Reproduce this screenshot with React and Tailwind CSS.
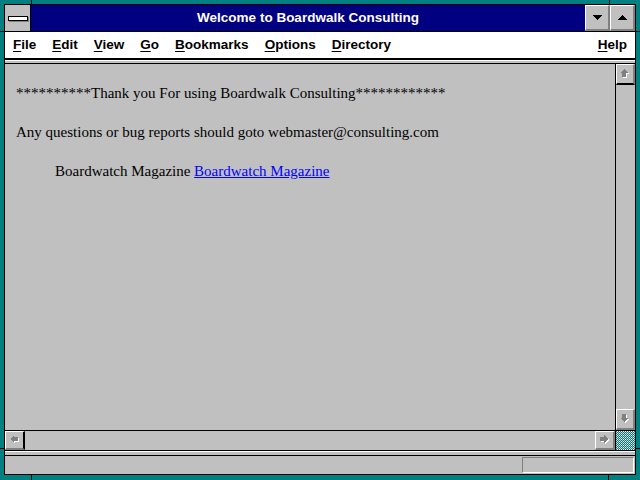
import { useState } from "react";

const sans = { fontFamily: '"Liberation Sans", Arial, sans-serif' };
const serif = { fontFamily: '"Liberation Serif", "Times New Roman", serif' };

const bevel =
  "bg-[#c0c0c0] border-t border-l border-r-2 border-b-2 border-t-white border-l-white border-r-[#808080] border-b-[#808080]";

function ScrollArrow({ dir }) {
  // grey arrow with a white drop shadow, like a disabled win 3.1 scroll arrow
  const shapes = {
    up: "4,0 8,4 6,4 6,8 2,8 2,4 0,4",
    down: "2,0 6,0 6,4 8,4 4,8 0,4 2,4",
    left: "0,4 4,0 4,2 8,2 8,6 4,6 4,8",
    right: "0,2 4,2 4,0 8,4 4,8 4,6 0,6",
  };
  return (
    <svg width="10" height="10" viewBox="0 0 10 10" shapeRendering="crispEdges">
      <polygon points={shapes[dir]} fill="#ffffff" transform="translate(1,1)" />
      <polygon points={shapes[dir]} fill="#808080" />
    </svg>
  );
}

function MenuItem({ first, rest }) {
  return (
    <div className="px-2">
      <span className="underline underline-offset-2">{first}</span>
      {rest}
    </div>
  );
}

export default function App() {
  const [menu] = useState([
    ["F", "ile"],
    ["E", "dit"],
    ["V", "iew"],
    ["G", "o"],
    ["B", "ookmarks"],
    ["O", "ptions"],
    ["D", "irectory"],
  ]);

  return (
    <div className="relative w-[640px] h-[480px] bg-[#008080] border-t-4 border-l-4 border-r-4 border-b-[5px] border-[#008080]">
      {/* resize notches in the frame */}
      <div className="absolute left-[27px] -top-[4px] w-px h-[4px] bg-black" />
      <div className="absolute left-[605px] -top-[4px] w-px h-[4px] bg-black" />
      <div className="absolute -left-[4px] top-[27px] w-[4px] h-px bg-black" />
      <div className="absolute -right-[4px] top-[27px] w-[4px] h-px bg-black" />
      <div className="absolute left-[27px] -bottom-[5px] w-px h-[5px] bg-black" />
      <div className="absolute left-[604px] -bottom-[5px] w-px h-[5px] bg-black" />
      <div className="absolute -left-[4px] top-[444px] w-[4px] h-px bg-black" />
      <div className="absolute -right-[4px] top-[444px] w-[4px] h-px bg-black" />

      <div className="flex flex-col w-full h-full border border-black bg-[#c0c0c0]">
        {/* title bar */}
        <div className="flex shrink-0 h-[27px] border-b border-black" style={sans}>
          <div className="w-[26px] border-r border-black bg-[#c0c0c0] flex items-center justify-center">
            <div className="w-[20px] h-[5px] bg-white border border-black shadow-[1px_1px_0_#808080]" />
          </div>
          <div className="flex-1 bg-[#000080] text-white font-bold text-[13.5px] flex items-center justify-center">
            Welcome to Boardwalk Consulting
          </div>
          <div className={`w-[25px] border-l border-black flex items-center justify-center ${bevel}`}>
            <svg width="9" height="5" viewBox="0 0 9 5" shapeRendering="crispEdges">
              <polygon points="0,0 9,0 4.5,5" fill="#000" />
            </svg>
          </div>
          <div className={`w-[25px] border-l border-black flex items-center justify-center ${bevel}`}>
            <svg width="9" height="5" viewBox="0 0 9 5" shapeRendering="crispEdges">
              <polygon points="4.5,0 9,5 0,5" fill="#000" />
            </svg>
          </div>
        </div>

        {/* menu bar */}
        <div
          className="flex shrink-0 items-center h-[28px] bg-white text-black font-bold text-[13.5px] border-b-2 border-black"
          style={sans}
        >
          {menu.map(([f, r]) => (
            <MenuItem key={f} first={f} rest={r} />
          ))}
          <div className="ml-auto">
            <MenuItem first="H" rest="elp" />
          </div>
        </div>

        {/* hidden toolbar strip */}
        <div className="shrink-0 h-[4px] bg-[#c0c0c0] border-t border-white border-b border-b-black" />

        {/* document + vertical scrollbar */}
        <div className="flex flex-1 min-h-0 border-b border-black">
          <div className="flex-1 pl-[11px] pt-[20px] text-[15px] leading-[18px] text-black" style={serif}>
            <p>**********Thank you For using Boardwalk Consulting************</p>
            <p className="mt-[21px]">Any questions or bug reports should goto webmaster@consulting.com</p>
            <p className="mt-[21px] pl-[39px]">
              Boardwatch Magazine{" "}
              <a href="#" className="text-[#0000ff] underline">
                Boardwatch Magazine
              </a>
            </p>
          </div>
          <div className="w-[20px] flex flex-col border-l border-black">
            <div className={`h-[21px] flex items-center justify-center border-b border-b-black ${bevel}`}>
              <ScrollArrow dir="up" />
            </div>
            <div className="flex-1" />
            <div className={`h-[21px] flex items-center justify-center border-t border-t-black ${bevel}`}>
              <ScrollArrow dir="down" />
            </div>
          </div>
        </div>

        {/* horizontal scrollbar */}
        <div className="flex shrink-0 h-[20px] border-b border-black">
          <div className={`w-[20px] flex items-center justify-center border-r border-r-black ${bevel}`}>
            <ScrollArrow dir="left" />
          </div>
          <div className="flex-1" />
          <div className={`w-[20px] flex items-center justify-center border-l border-l-black ${bevel}`}>
            <ScrollArrow dir="right" />
          </div>
          <div className="w-[20px] border-l border-black">
            <svg width="19" height="19" className="block">
              <defs>
                <pattern id="dither" width="2" height="2" patternUnits="userSpaceOnUse">
                  <rect width="2" height="2" fill="#008080" />
                  <rect x="1" y="0" width="1" height="1" fill="#ffffff" />
                  <rect x="0" y="1" width="1" height="1" fill="#c0c0c0" />
                </pattern>
              </defs>
              <rect width="19" height="19" fill="url(#dither)" />
            </svg>
          </div>
        </div>

        {/* separator strip */}
        <div className="shrink-0 h-[5px] bg-[#c0c0c0] border-t border-white border-b border-b-black" />

        {/* status bar */}
        <div className="shrink-0 h-[18px] flex justify-end items-start pt-[1px] pr-[1px]">
          <div className="w-[112px] h-[16px] border-t border-l border-t-[#808080] border-l-[#808080] border-b border-r border-b-white border-r-white" />
        </div>
      </div>
    </div>
  );
}
